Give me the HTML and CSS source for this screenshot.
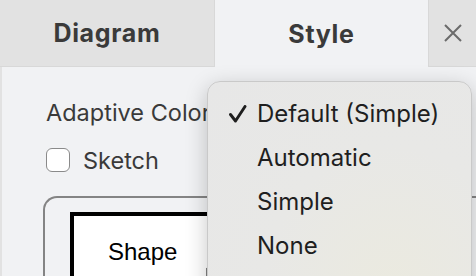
FILE: index.html
```html
<!DOCTYPE html>
<html lang="en">
<head>
    <meta charset="UTF-8">
    <title>Format Panel</title>
    <link rel="stylesheet" href="styles.css">
</head>
<body>
<div class="sidebar">
    <div class="tabs">
        <div class="tab tab-diagram">Diagram</div>
        <div class="tab tab-style">Style</div>
        <div class="tab tab-close">
            <svg width="20" height="20" viewBox="0 0 20 20">
                <path d="M2 2 L18 18 M18 2 L2 18" stroke="#6b6b6b" stroke-width="2" fill="none"/>
            </svg>
        </div>
    </div>
    <div class="panel">
        <div class="row label">Adaptive Colors</div>
        <label class="row check-row">
            <span class="checkbox"></span>
            <span>Sketch</span>
        </label>
        <div class="preview">
            <div class="shape">Shape</div>
        </div>
    </div>

    <svg class="pointer" width="12" height="14" viewBox="0 0 12 14">
        <path d="M1 1 L1 13 L10 8 Z" fill="#000" stroke="#fff" stroke-width="1"/>
    </svg>

    <!-- dropdown opened from the Adaptive Colors select -->
    <div class="menu">
        <div class="menu-item selected">
            <svg class="tick" width="18" height="18" viewBox="0 0 18 18">
                <path d="M1.5 9.5 L6.5 16 L16 1.5" stroke="#1e1e1e" stroke-width="2.9" fill="none" stroke-linecap="round" stroke-linejoin="round"/>
            </svg>
            Default (Simple)
        </div>
        <div class="menu-item">Automatic</div>
        <div class="menu-item">Simple</div>
        <div class="menu-item">None</div>
    </div>
</div>
</body>
</html>
```

FILE: styles.css
```css
body {
    margin: 0;
    font-family: Inter, "Liberation Sans", sans-serif;
    background: #f1f2f4;
}
.sidebar {
    position: relative;
    width: 476px;
    height: 276px;
    overflow: hidden;
    background: #f1f2f4;
}
.tabs {
    display: flex;
    height: 67px;
}
.tab {
    display: flex;
    align-items: center;
    justify-content: center;
    font-size: 25px;
    font-weight: 700;
    letter-spacing: 0.7px;
    color: #3a3a3a;
}
.tab-diagram {
    width: 214px;
    background: #e2e2e2;
    border-right: 1px solid #d8d8d8;
    border-bottom: 1px solid #d8d8d8;
}
.tab-style {
    width: 213px;
    background: #f1f2f4;
}
.tab-close {
    flex: 1;
    background: #e2e2e2;
    border-left: 1px solid #d8d8d8;
    border-bottom: 1px solid #d8d8d8;
}
.panel {
    height: 209px;
    border-left: 2px solid #e2e2e2;
    padding: 0 0 0 44px;
    display: flex;
    flex-direction: column;
    color: #3a3a3a;
    font-size: 23.5px;
}
.row {
    display: flex;
    align-items: center;
    flex-shrink: 0;
}
.label {
    height: 46px;
    margin-top: 22px;
    white-space: nowrap;
}
.check-row {
    height: 50px;
    gap: 13px;
}
.checkbox {
    width: 22px;
    height: 22px;
    border: 1.5px solid #8a8a8a;
    border-radius: 6px;
    background: #fff;
}
.preview {
    flex-shrink: 0;
    margin-top: 11px;
    margin-left: -3px;
    height: 120px;
    border: 2px solid #848484;
    border-bottom: none;
    border-right: none;
    border-radius: 14px 0 0 0;
    padding: 14px 0 0 25px;
}
.shape {
    width: 300px;
    height: 100px;
    background: #fff;
    border: 4px solid #000;
    color: #000;
    font-family: "Liberation Sans", sans-serif;
    font-size: 24px;
    padding: 22px 0 0 34px;
}
.pointer {
    position: absolute;
    left: 205px;
    top: 266px;
}
.menu {
    position: absolute;
    left: 207px;
    top: 81px;
    width: 263px;
    height: 210px;
    border: 1px solid #c9c9c9;
    border-radius: 13px;
    background: radial-gradient(ellipse at 70% 100%, #ebeadf 0%, #e8e8e6 50%, #e7e7e7 100%);
    box-shadow: 0 6px 22px rgba(0, 0, 0, 0.22);
    padding-top: 9px;
    color: #1f1f1f;
    font-size: 24px;
}
.menu-item {
    position: relative;
    height: 44px;
    display: flex;
    align-items: center;
    padding-left: 49px;
}
.tick {
    position: absolute;
    left: 21px;
    top: 14px;
}
```
